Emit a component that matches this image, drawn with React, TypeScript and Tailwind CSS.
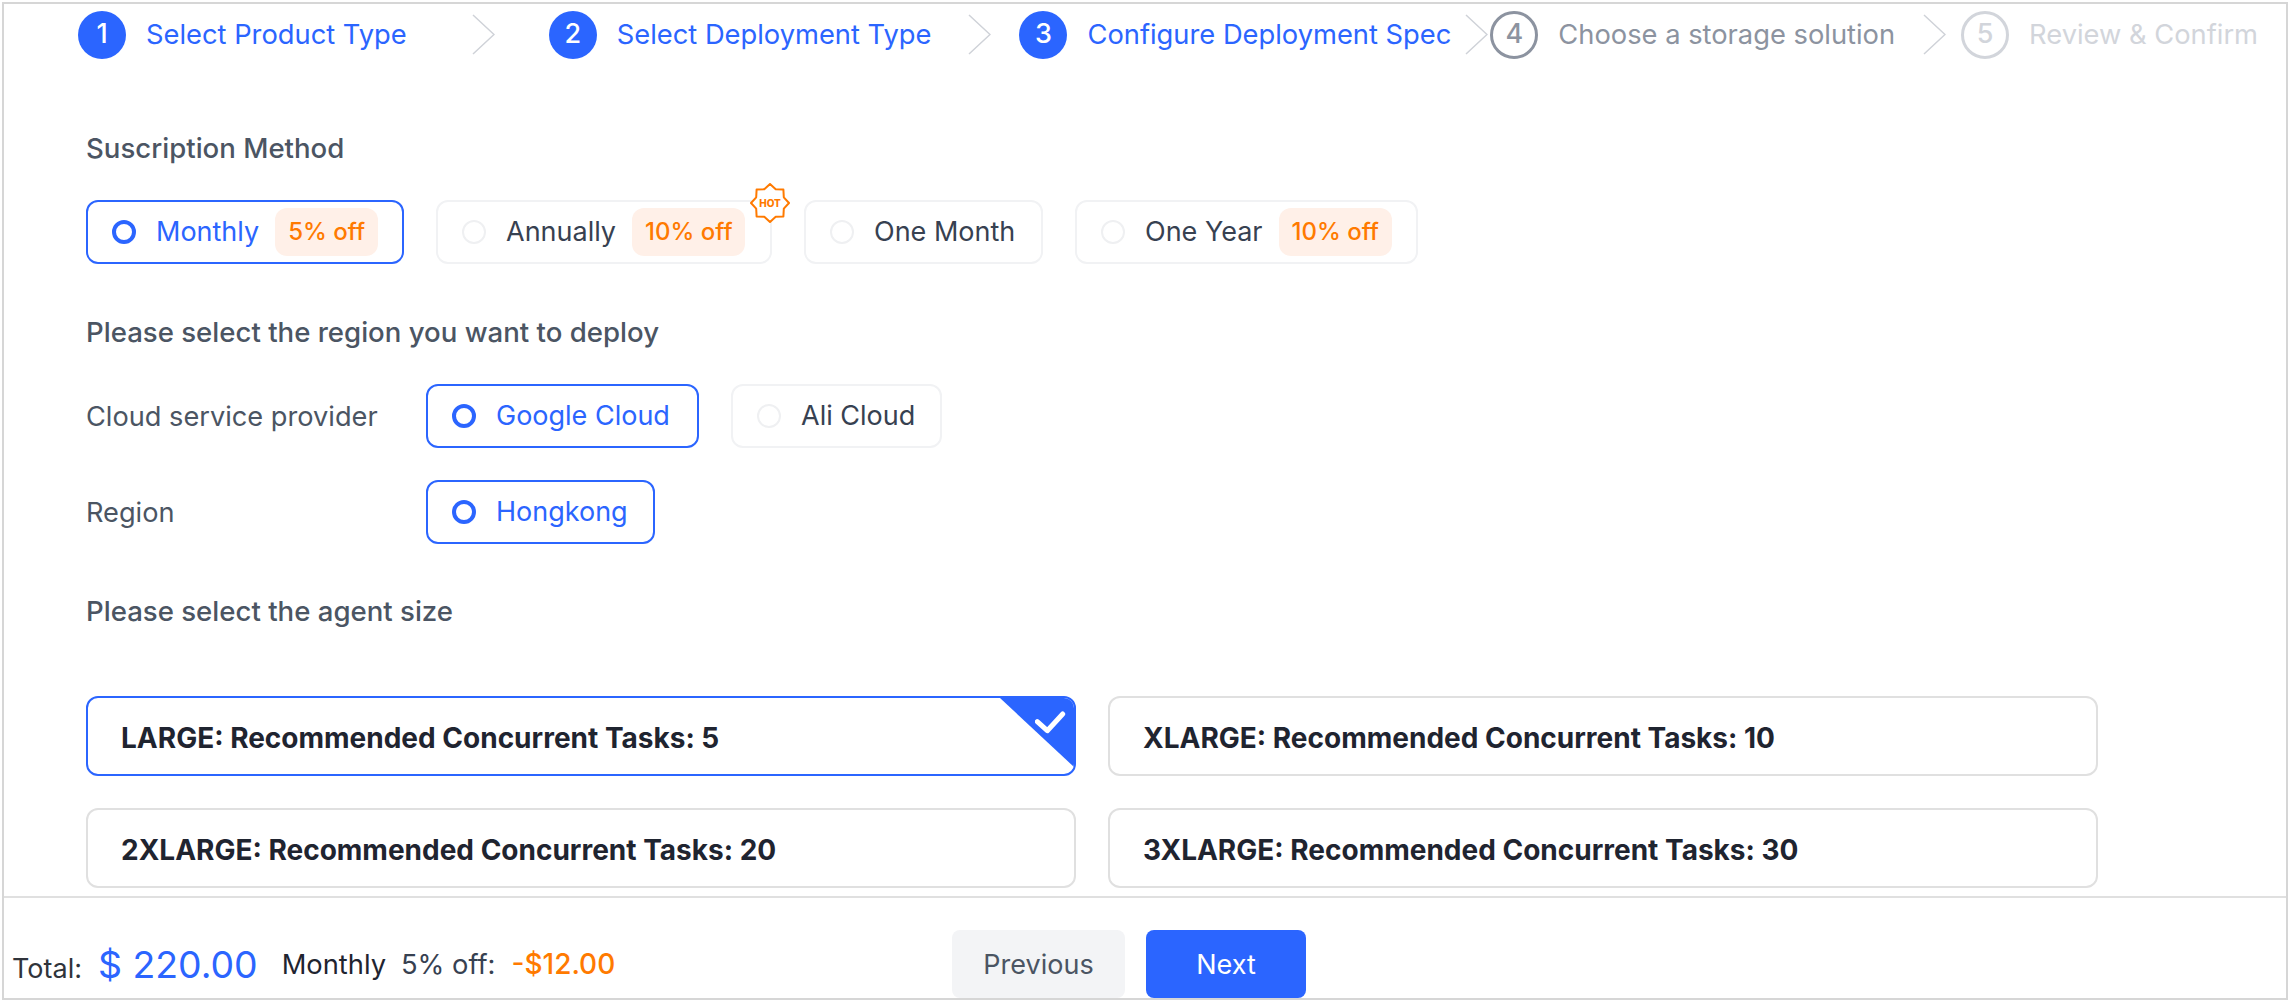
const BLUE = "#2b65ff"

function StepChevron({ className }: { className: string }) {
  return (
    <svg viewBox="0 0 23 41" className={`h-[41px] w-[23px] shrink-0 ${className}`} fill="none">
      <path d="M1 1 L22 20.5 L1 40" stroke="#cfd2d8" strokeWidth="1.5" />
    </svg>
  )
}

function Step({
  num,
  label,
  state,
}: {
  num: number
  label: string
  state: "done" | "next" | "todo"
}) {
  const circle =
    state === "done"
      ? "bg-[#2b65ff] text-white"
      : state === "next"
        ? "border-[3px] border-[#8c93a0] text-[#8c93a0]"
        : "border-[3px] border-[#d2d5db] text-[#d2d5db]"
  const text =
    state === "done"
      ? "text-[#2b65ff]"
      : state === "next"
        ? "text-[#8c93a0]"
        : "text-[#d2d5db]"
  return (
    <div className="flex shrink-0 items-center">
      <div className={`flex h-12 w-12 items-center justify-center rounded-full text-[27px] font-medium ${circle}`}>
        {num}
      </div>
      <span className={`ml-5 pt-[1px] text-[27.3px] leading-[48px] whitespace-nowrap ${text}`}>{label}</span>
    </div>
  )
}

function Discount({ children }: { children: string }) {
  return (
    <span className="ml-4 flex h-12 items-center rounded-[12px] bg-[#fff0e8] px-[13px] text-[24px] font-medium whitespace-nowrap text-[#ff7a00]">
      {children}
    </span>
  )
}

function RadioCard({
  label,
  selected,
  discount,
  hot,
  className,
}: {
  label: string
  selected?: boolean
  discount?: string
  hot?: boolean
  className: string
}) {
  return (
    <div
      className={`relative flex h-[64px] shrink-0 items-center rounded-[12px] border-2 pl-[24px] ${className} ${
        selected ? "border-[#2b65ff] text-[#2b65ff]" : "border-[#f1f2f4] text-[#374151]"
      }`}
    >
      <span
        className={`h-6 w-6 shrink-0 rounded-full ${
          selected ? "border-[4.5px] border-[#2b65ff]" : "border-2 border-[#eff0f2]"
        }`}
      />
      <span className="ml-[20px] pt-[1px] text-[27px] whitespace-nowrap">{label}</span>
      {discount && <Discount>{discount}</Discount>}
      {hot && (
        <div className="absolute -top-[19px] -right-[20px] flex h-10 w-10 items-center justify-center">
          <svg viewBox="0 0 40 40" className="absolute inset-0 h-10 w-10" fill="#ffffff">
            <polygon
              points="20,1 25.7,6.2 33.4,6.6 33.8,14.3 39,20 33.8,25.7 33.4,33.4 25.7,33.8 20,39 14.3,33.8 6.6,33.4 6.2,25.7 1,20 6.2,14.3 6.6,6.6 14.3,6.2"
              stroke="#ff7a00"
              strokeWidth="2"
              strokeLinejoin="round"
            />
          </svg>
          <span className="relative text-[10px] leading-none font-extrabold text-[#ff7a00]">HOT</span>
        </div>
      )}
    </div>
  )
}

function AgentCard({ label, selected }: { label: string; selected?: boolean }) {
  return (
    <div
      className={`relative flex h-20 items-center overflow-hidden rounded-[12px] border-2 pl-[33px] ${
        selected ? "border-[#2b65ff]" : "border-[#e0e0e0]"
      }`}
    >
      <span className="pt-[3px] text-[28px] font-bold whitespace-nowrap text-[#1f2430]">{label}</span>
      {selected && (
        <>
          <div className="absolute top-0 right-0 h-[69px] w-[74px] bg-[#2b65ff] [clip-path:polygon(0_0,100%_0,100%_100%)]" />
          <svg viewBox="0 0 32 32" className="absolute top-[8px] right-[7px] h-8 w-8" fill="none">
            <path
              d="M2.3 15.7 L12.3 24.7 L27.7 8"
              stroke="#ffffff"
              strokeWidth="5"
              strokeLinecap="round"
              strokeLinejoin="round"
            />
          </svg>
        </>
      )}
    </div>
  )
}

export default function App() {
  return (
    <div className="h-[1002px] w-full bg-white p-[2px] font-['Inter',sans-serif]">
      <div className="flex h-full flex-col overflow-hidden border-2 border-[#d6d6d6]">
        <div className="flex-1 overflow-hidden">
          <div className="flex items-center pt-[6px] pl-[74px]">
            <Step num={1} label="Select Product Type" state="done" />
            <StepChevron className="mr-[54px] ml-[65px]" />
            <Step num={2} label="Select Deployment Type" state="done" />
            <StepChevron className="mr-[28px] ml-[37px]" />
            <Step num={3} label="Configure Deployment Spec" state="done" />
            <StepChevron className="mr-[2px] ml-[14px]" />
            <Step num={4} label="Choose a storage solution" state="next" />
            <StepChevron className="mr-[15px] ml-[28px]" />
            <Step num={5} label="Review & Confirm" state="todo" />
          </div>

          <div className="pl-[82px]">
            <h3 className="mt-[73px] text-[27.6px] leading-[32px] font-medium text-[#4b5563]">Suscription Method</h3>
            <div className="mt-[36px] flex gap-[32px]">
              <RadioCard className="w-[318px]" label="Monthly" discount="5% off" selected />
              <RadioCard className="w-[336px]" label="Annually" discount="10% off" hot />
              <RadioCard className="w-[239px]" label="One Month" />
              <RadioCard className="w-[343px]" label="One Year" discount="10% off" />
            </div>

            <h3 className="mt-[52px] text-[27.6px] leading-[32px] font-medium text-[#4b5563]">
              Please select the region you want to deploy
            </h3>
            <div className="mt-[36px] flex items-center">
              <span className="w-[340px] pt-[3px] text-[27.2px] text-[#4b5563]">Cloud service provider</span>
              <div className="flex gap-[32px]">
                <RadioCard className="w-[273px]" label="Google Cloud" selected />
                <RadioCard className="w-[211px]" label="Ali Cloud" />
              </div>
            </div>
            <div className="mt-[32px] flex items-center">
              <span className="w-[340px] pt-[3px] text-[27.2px] text-[#4b5563]">Region</span>
              <RadioCard className="w-[229px]" label="Hongkong" selected />
            </div>

            <h3 className="mt-[51px] text-[27.6px] leading-[32px] font-medium text-[#4b5563]">Please select the agent size</h3>
            <div className="mt-[69px] grid w-[2012px] grid-cols-[990px_990px] gap-x-[32px] gap-y-[32px]">
              <AgentCard label="LARGE: Recommended Concurrent Tasks: 5" selected />
              <AgentCard label="XLARGE: Recommended Concurrent Tasks: 10" />
              <AgentCard label="2XLARGE: Recommended Concurrent Tasks: 20" />
              <AgentCard label="3XLARGE: Recommended Concurrent Tasks: 30" />
            </div>
          </div>
        </div>

        <div className="flex h-[102px] shrink-0 border-t-2 border-[#e0e0e0]">
          <div className="flex w-[948px] shrink-0 items-end pb-[7px] pl-[8px]">
            <div className="flex items-baseline">
              <span className="text-[27px] leading-[44px] text-[#30343b]">Total:</span>
              <span className="ml-[16px] text-[37.4px] leading-[44px] text-[#2b65ff]">$ 220.00</span>
            </div>
            <div className="mb-[4px] ml-[24px] flex items-baseline text-[27.3px] leading-[44px]">
              <span className="text-[#1f2430]">Monthly</span>
              <span className="ml-[15px] text-[#374151]">5% off:</span>
              <span className="ml-[16px] text-[28px] font-medium text-[#ff7a00]">-$12.00</span>
            </div>
          </div>
          <div className="flex items-end gap-[21px]">
            <button type="button" className="h-[68px] w-[173px] rounded-[8px] bg-[#f3f4f6] pt-[2px] text-[27px] text-[#4b5563]">
              Previous
            </button>
            <button type="button" className="h-[68px] w-[160px] rounded-[8px] pt-[2px] text-[27px] text-white" style={{ background: BLUE }}>
              Next
            </button>
          </div>
        </div>
      </div>
    </div>
  )
}
